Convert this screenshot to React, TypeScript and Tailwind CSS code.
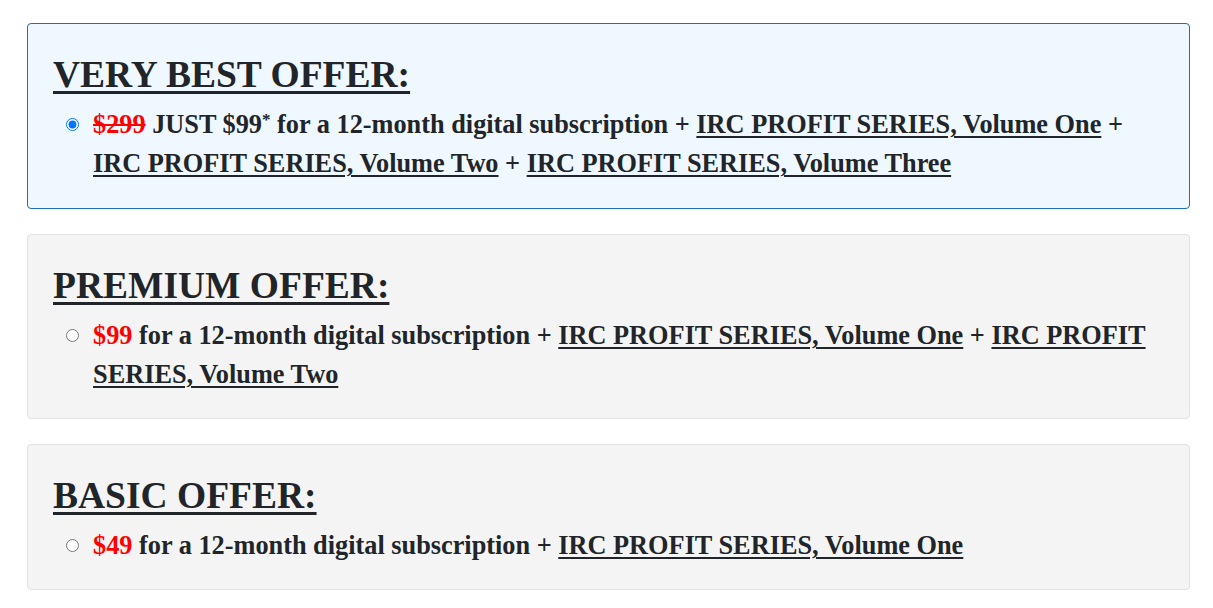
import React from "react";

const serif = { fontFamily: '"Liberation Serif", "Times New Roman", serif' };

function Radio({ checked }: { checked?: boolean }) {
  return (
    <input
      type="radio"
      name="offer"
      defaultChecked={checked}
      className="mt-[13px] ml-[13px] mr-[14px] h-[13px] w-[13px] shrink-0 accent-[#0075ff]"
    />
  );
}

function Link({ children }: { children: React.ReactNode }) {
  return <span className="underline decoration-[2px] underline-offset-[3px]">{children}</span>;
}

function Card({
  title,
  active,
  children,
}: {
  title: string;
  active?: boolean;
  children: React.ReactNode;
}) {
  return (
    <div
      className={
        active
          ? "rounded-[4px] border border-[#1f6fb2] bg-[#eff7ff] pl-[25px] pr-[22px] pt-[29px] pb-[25px]"
          : "rounded-[4px] border border-[#e2e2e2] bg-[#f4f4f4] pl-[25px] pr-[22px] pt-[29px] pb-[24px]"
      }
    >
      <h2 className="text-[37.5px] font-bold leading-[44px] underline decoration-[3px] underline-offset-[4px] text-[#212529]">
        {title}
      </h2>
      <label className="mt-[8px] flex items-start text-[26.3px] font-bold leading-[39px] text-[#212529]">
        {children}
      </label>
    </div>
  );
}

export default function App() {
  return (
    <div className="min-h-screen bg-white" style={serif}>
      <div className="flex flex-col gap-[25px] pl-[27px] pr-[23px] pt-[23px] pb-[20px]">
        <Card title="VERY BEST OFFER:" active>
          <Radio checked />
          <span>
            <span className="text-[#ff0000] line-through decoration-[2px]">$299</span> JUST $99
            <sup className="text-[17px]">*</sup> for a 12-month digital subscription +{" "}
            <Link>IRC PROFIT SERIES, Volume One</Link> + <Link>IRC PROFIT SERIES, Volume Two</Link> +{" "}
            <Link>IRC PROFIT SERIES, Volume Three</Link>
          </span>
        </Card>
        <Card title="PREMIUM OFFER:">
          <Radio />
          <span>
            <span className="text-[#ff0000]">$99</span> for a 12-month digital subscription +{" "}
            <Link>IRC PROFIT SERIES, Volume One</Link> + <Link>IRC PROFIT SERIES, Volume Two</Link>
          </span>
        </Card>
        <Card title="BASIC OFFER:">
          <Radio />
          <span>
            <span className="text-[#ff0000]">$49</span> for a 12-month digital subscription +{" "}
            <Link>IRC PROFIT SERIES, Volume One</Link>
          </span>
        </Card>
      </div>
    </div>
  );
}
